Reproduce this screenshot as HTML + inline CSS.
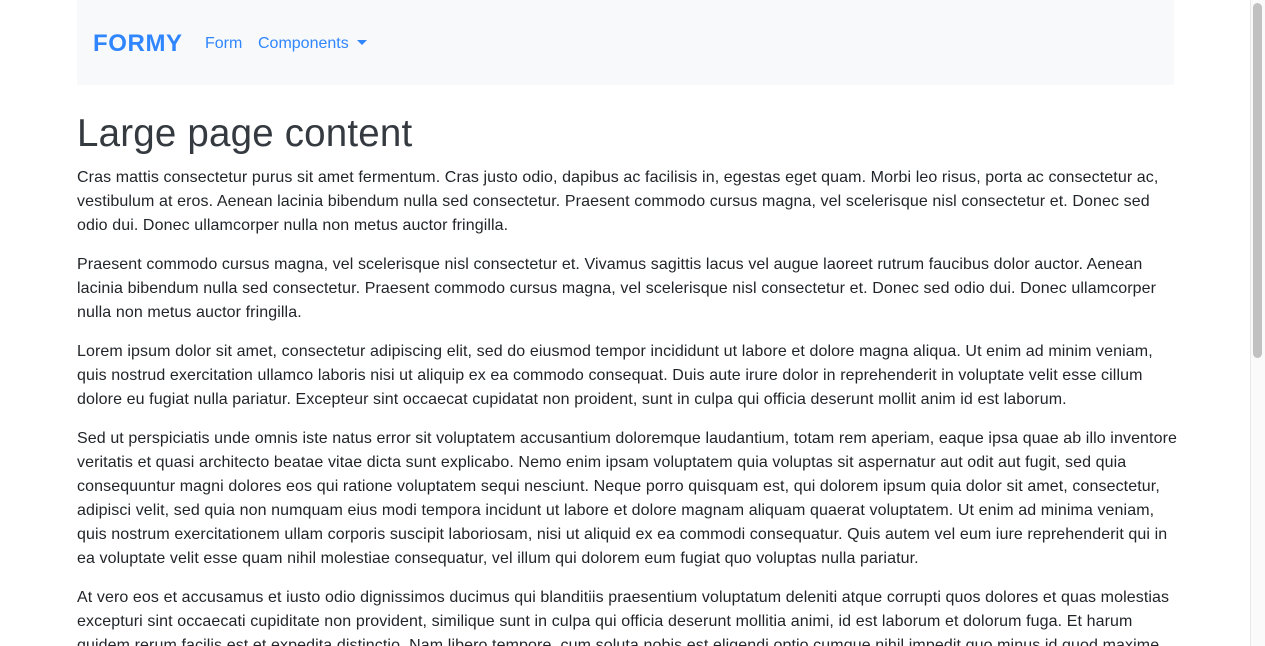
<!DOCTYPE html>
<html><head><meta charset="utf-8"><style>
html,body{margin:0;padding:0;background:#fff;overflow:hidden}
body{width:1265px;height:646px;font-family:"Liberation Sans",Arial,sans-serif;color:#212529;position:relative}
.nav{position:absolute;left:77px;top:0;width:1097px;height:85px;background:#f8f9fa}
.brand{position:absolute;left:16px;top:29px;font-size:24px;font-weight:bold;color:#2f86ff;line-height:30px;letter-spacing:0.6px}
.link{position:absolute;top:34px;font-size:16px;color:#2f86ff;line-height:20px}
.caret{display:inline-block;width:0;height:0;border-left:5px solid transparent;border-right:5px solid transparent;border-top:5px solid #2f86ff;vertical-align:3px;margin-left:8px}
.main{position:absolute;left:77px;top:85px;width:1120px}
h1{margin:25px 0 8px;font-size:38.5px;font-weight:500;line-height:48px;color:#343a40;letter-spacing:0.2px}
p{margin:0 0 15px;font-size:16px;line-height:24px;white-space:nowrap;letter-spacing:0.1px}
.sb{position:absolute;left:1250px;top:0;width:15px;height:646px;background:#fafafa;border-left:1px solid #e8e8e8;box-sizing:border-box}
.th{position:absolute;left:1253px;top:3px;width:9px;height:355px;background:#c1c1c1;border-radius:5px}
</style></head><body>
<div class="nav">
<div class="brand">FORMY</div>
<div class="link" style="left:128px">Form</div>
<div class="link" style="left:181px">Components<span class="caret"></span></div>
</div>
<div class="main">
<h1>Large page content</h1>
<p>Cras mattis consectetur purus sit amet fermentum. Cras justo odio, dapibus ac facilisis in, egestas eget quam. Morbi leo risus, porta ac consectetur ac,<br>vestibulum at eros. Aenean lacinia bibendum nulla sed consectetur. Praesent commodo cursus magna, vel scelerisque nisl consectetur et. Donec sed<br>odio dui. Donec ullamcorper nulla non metus auctor fringilla.</p>
<p>Praesent commodo cursus magna, vel scelerisque nisl consectetur et. Vivamus sagittis lacus vel augue laoreet rutrum faucibus dolor auctor. Aenean<br>lacinia bibendum nulla sed consectetur. Praesent commodo cursus magna, vel scelerisque nisl consectetur et. Donec sed odio dui. Donec ullamcorper<br>nulla non metus auctor fringilla.</p>
<p>Lorem ipsum dolor sit amet, consectetur adipiscing elit, sed do eiusmod tempor incididunt ut labore et dolore magna aliqua. Ut enim ad minim veniam,<br>quis nostrud exercitation ullamco laboris nisi ut aliquip ex ea commodo consequat. Duis aute irure dolor in reprehenderit in voluptate velit esse cillum<br>dolore eu fugiat nulla pariatur. Excepteur sint occaecat cupidatat non proident, sunt in culpa qui officia deserunt mollit anim id est laborum.</p>
<p>Sed ut perspiciatis unde omnis iste natus error sit voluptatem accusantium doloremque laudantium, totam rem aperiam, eaque ipsa quae ab illo inventore<br>veritatis et quasi architecto beatae vitae dicta sunt explicabo. Nemo enim ipsam voluptatem quia voluptas sit aspernatur aut odit aut fugit, sed quia<br>consequuntur magni dolores eos qui ratione voluptatem sequi nesciunt. Neque porro quisquam est, qui dolorem ipsum quia dolor sit amet, consectetur,<br>adipisci velit, sed quia non numquam eius modi tempora incidunt ut labore et dolore magnam aliquam quaerat voluptatem. Ut enim ad minima veniam,<br>quis nostrum exercitationem ullam corporis suscipit laboriosam, nisi ut aliquid ex ea commodi consequatur. Quis autem vel eum iure reprehenderit qui in<br>ea voluptate velit esse quam nihil molestiae consequatur, vel illum qui dolorem eum fugiat quo voluptas nulla pariatur.</p>
<p>At vero eos et accusamus et iusto odio dignissimos ducimus qui blanditiis praesentium voluptatum deleniti atque corrupti quos dolores et quas molestias<br>excepturi sint occaecati cupiditate non provident, similique sunt in culpa qui officia deserunt mollitia animi, id est laborum et dolorum fuga. Et harum<br>quidem rerum facilis est et expedita distinctio. Nam libero tempore, cum soluta nobis est eligendi optio cumque nihil impedit quo minus id quod maxime</p>
</div>
<div class="sb"></div><div class="th"></div>
</body></html>
